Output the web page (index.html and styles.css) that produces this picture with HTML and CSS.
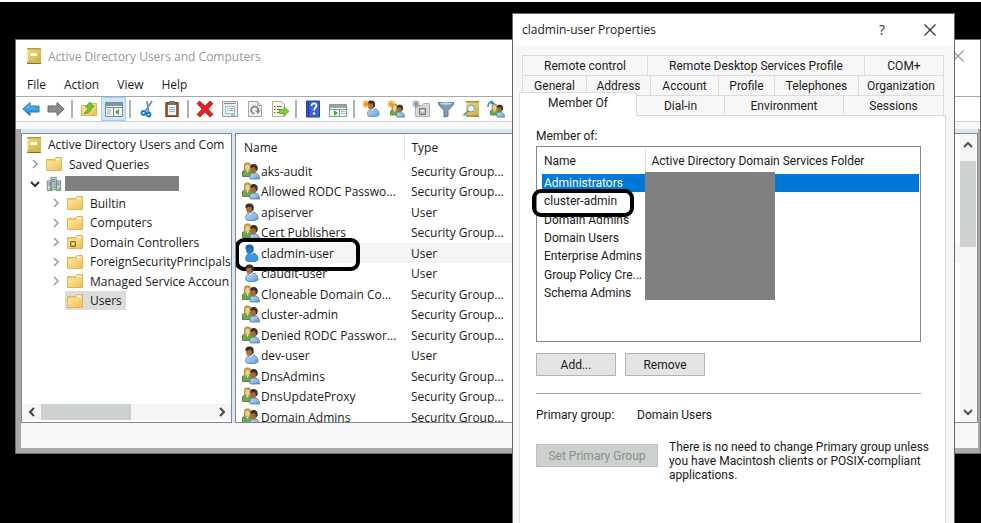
FILE: index.html
```html
<!DOCTYPE html>
<html lang="en">
<head>
    <meta charset="UTF-8">
    <meta name="viewport" content="width=device-width, initial-scale=1.0">
    <title>Active Directory Users and Computers</title>
    <link rel="stylesheet" href="styles.css">
</head>
<body>

<!-- shared icons -->
<svg class="sprite" aria-hidden="true">
    <defs>
        <linearGradient id="gold" x1="0" y1="0" x2="1" y2="1">
            <stop offset="0" stop-color="#ffe9a8"/>
            <stop offset="1" stop-color="#eebf52"/>
        </linearGradient>
        <linearGradient id="cover" x1="0" y1="0" x2="1" y2="1">
            <stop offset="0" stop-color="#f3e08a"/>
            <stop offset="1" stop-color="#c9ab3c"/>
        </linearGradient>
        <linearGradient id="sky" x1="0" y1="0" x2="0" y2="1">
            <stop offset="0" stop-color="#6cc7f7"/>
            <stop offset="1" stop-color="#1a7fd0"/>
        </linearGradient>
        <linearGradient id="body" x1="0" y1="0" x2="1" y2="1">
            <stop offset="0" stop-color="#c6e0f6"/>
            <stop offset="1" stop-color="#5f9dd6"/>
        </linearGradient>
    </defs>
    <symbol id="book" viewBox="0 0 14 16">
        <path d="M0 0h14v16H0z" fill="url(#cover)"/>
        <path d="M0 0h14v1.500H0z" fill="#b09a45"/>
        <path d="M0 13h14v2H0z" fill="#d3b94e"/>
        <path d="M0 15h14v1H0z" fill="#84702a"/>
        <path d="M2.500 4.500h8v4h-8z" fill="#fffbe0" stroke="#dcc566"/>
        <path d="M.5 1.500v12" stroke="#fbf0a8"/>
    </symbol>
    <symbol id="folder" viewBox="0 0 16 16">
        <path d="M.5 3.500h8l1.500-2h5.500v13H.5z" fill="#f3cd6c" stroke="#e0b65a"/>
        <path d="M10 2.500h4v2h-4z" fill="#fff"/>
        <path d="M1 5.500h9l1-1h4V14H1z" fill="url(#gold)"/>
    </symbol>
    <symbol id="ou" viewBox="0 0 16 16">
        <use href="#folder"/>
        <path d="M3.500 7.500h5v5h-5z" fill="#d8b63c" stroke="#8d701a"/>
        <path d="M5 9h2v1.500H5z" fill="#fff7c8"/>
    </symbol>
    <symbol id="domain" viewBox="0 0 18 18">
        <g fill="#c8d3d8" stroke="#6f8088">
            <path d="M5.500 1.500h6v14h-6zM1.500 5.500h5v11h-5zM11.500 5.500h5v11h-5z"/>
        </g>
        <path d="M7 4h3M7 6h3M3 8h2M3 10h2M13 8h2M13 10h2M8 9h2" stroke="#4d6570"/>
        <path d="M4 13.500h2v2H4zM8 11.500h2v2H8zM14 13.500h2v2h-2z" fill="#3cd03c"/>
    </symbol>
    <symbol id="user" viewBox="0 0 16 18">
        <path d="M3 16.500c-1-3 0-5 2-6.500l3 2 3-3c3 1.500 4.500 4 4 7l-3 1.500H5z" fill="url(#body)" stroke="#4277ab" stroke-width=".7"/>
        <path d="M5 9l3 3 2-3-1-2H5z" fill="#e8f2fb"/>
        <ellipse cx="6.500" cy="5.500" rx="3.500" ry="4.500" fill="#a9713f"/>
        <path d="M2.500 5C2 1.500 4 .5 6.500.5c3 0 5 1.500 4 6.500l-1.500 1.500C9 6 8.500 4 7.500 3.500z" fill="#3a3028"/>
    </symbol>
    <symbol id="user-on" viewBox="0 0 16 18">
        <path d="M3 16.500c-1-3 0-5 2-6.500l3 1 3-2c3 1.500 4.500 4 4 7l-3 1.500H5z" fill="#3a9ae2" stroke="#1763a8" stroke-width=".7"/>
        <ellipse cx="6.500" cy="5.500" rx="3.500" ry="4.500" fill="#2d77b4"/>
        <path d="M2.500 5C2 1.500 4 .5 6.500.5c3 0 5 1.500 4 6.500l-1.500 1.500C9 6 8.500 4 7.500 3.500z" fill="#1f659f"/>
    </symbol>
    <symbol id="group" viewBox="0 0 18 18">
        <path d="M.5 14.500V9.500l3-2h4l2 2v5z" fill="#6fa84a" stroke="#33631c" stroke-width=".7"/>
        <path d="M4 8l1.500 3L7 8z" fill="#dff0d0"/>
        <path d="M2 9V3.500C2 1 4 .5 5.500.5S9 1 9 3.500V8z" fill="#b8963f"/>
        <ellipse cx="5.500" cy="5.500" rx="2.200" ry="3" fill="#f3cb9c"/>
        <path d="M8 16.500c-.5-2 0-4 1.500-5.500h4.500c2.500 1 3.500 3 3.500 6H9z" fill="url(#body)" stroke="#3c70a5" stroke-width=".7"/>
        <ellipse cx="11.500" cy="7.500" rx="3" ry="4" fill="#a46c3c"/>
        <path d="M8.500 6C8 2.500 10 2 12 2s4.500 1.500 3.500 6L14 9.500C14 7 13 5 12 5z" fill="#3a3028"/>
    </symbol>
    <symbol id="star" viewBox="0 0 8 8">
        <path d="M4 0v8M0 4h8M1.200 1.200l5.600 5.600M6.800 1.200L1.200 6.800" stroke="currentColor" stroke-width="1.200"/>
        <circle cx="4" cy="4" r="2" fill="currentColor"/>
    </symbol>
    <symbol id="right" viewBox="0 0 10 10"><path d="M3 1l4 4-4 4" fill="none" stroke="currentColor" stroke-width="1.500"/></symbol>
    <symbol id="left" viewBox="0 0 10 10"><path d="M7 1L3 5l4 4" fill="none" stroke="currentColor" stroke-width="2"/></symbol>
    <symbol id="down" viewBox="0 0 10 10"><path d="M1 3l4 4 4-4" fill="none" stroke="currentColor" stroke-width="2"/></symbol>
    <symbol id="up" viewBox="0 0 10 10"><path d="M1 7l4-4 4 4" fill="none" stroke="currentColor" stroke-width="2"/></symbol>
    <symbol id="close" viewBox="0 0 12 12"><path d="M.5.5l11 11M11.500.5l-11 11" stroke="currentColor" stroke-width="1.200"/></symbol>
</svg>

<main class="desktop">

    <section class="window" aria-label="Active Directory Users and Computers">
        <header class="titlebar">
            <svg class="icon-book"><use href="#book"/></svg>
            <h1>Active Directory Users and Computers</h1>
            <button class="close" aria-label="Close"><svg class="icon-close"><use href="#close"/></svg></button>
        </header>

        <nav class="menu">
            <button>File</button>
            <button>Action</button>
            <button>View</button>
            <button>Help</button>
        </nav>

        <div class="toolbar" role="toolbar">
            <button aria-label="Back"><svg viewBox="0 0 18 18"><path d="M.8 9L8 2.500V6h9v6H8v3.500z" fill="url(#sky)" stroke="#2b78b5"/></svg></button>
            <button aria-label="Forward"><svg viewBox="0 0 18 18"><path d="M17.200 9L10 2.500V6H1v6h9v3.500z" fill="#8d8d8d" stroke="#666"/></svg></button>
            <span class="sep"></span>
            <button aria-label="Up one level"><svg viewBox="0 0 18 18"><path d="M1.500 5.500h6l2-2h7v12h-15z" fill="url(#gold)" stroke="#d9b25a"/><path d="M4 13.500c3-2 4-4 4-6.500H5.500l4.500-5 4 5h-2.500c0 4-3 6.500-7.500 6.500z" fill="#6ccc36" stroke="#3f9a1c" stroke-width=".8"/></svg></button>
            <button class="on" aria-label="Show tree"><svg viewBox="0 0 18 18"><path d="M.5 2.500h17v14H.5z" fill="#f3f5f7" stroke="#7d8a96"/><path d="M1 3h16v3H1z" fill="#8796a5"/><path d="M1 7.500h16M8.500 8v8" stroke="#7d8a96"/><path d="M2 10h4M2 12h4M2 14h4" stroke="#9fb0bf"/><path d="M14 9v6l-4-3z" fill="#35b52c"/></svg></button>
            <span class="sep"></span>
            <button aria-label="Cut"><svg viewBox="0 0 18 18"><path d="M14 1L7 12M9 1l1.500 11" stroke="#6d93b8" stroke-width="1.800"/><circle cx="5.500" cy="13" r="2" fill="none" stroke="#1c78c8" stroke-width="1.800"/><circle cx="10.500" cy="14.500" r="2" fill="none" stroke="#1c78c8" stroke-width="1.800"/></svg></button>
            <button aria-label="Paste"><svg viewBox="0 0 18 18"><path d="M2.800 2.500h12.400v14H2.800z" fill="#9a6034" stroke="#6d3e1c"/><path d="M5 5h8v10H5z" fill="#eef4fa"/><path d="M6 1h6v3.500H6z" fill="#777"/><path d="M6 7.500h6M6 9.500h6M6 11.500h6" stroke="#9ab"/></svg></button>
            <span class="sep"></span>
            <button aria-label="Delete"><svg viewBox="0 0 18 18"><path d="M1 3.500L3.500 1 9 6l5-5 3 2.500L12 9l5 5.500-3 2.500-5-5-5 5-3-2.500L6 9z" fill="#e32222" stroke="#b01010" stroke-width=".7"/></svg></button>
            <button aria-label="Properties"><svg viewBox="0 0 18 18"><path d="M1.500 1.500h15v15h-15z" fill="#eee" stroke="#9b9b9b"/><path d="M3 3.500h12" stroke="#8a8a8a"/><path d="M4.500 6.500h9v7h-9z" fill="#fff" stroke="#92bcd6"/><path d="M6 8.500h1.500M9 8.500h3M6 10.500h1.500M9 10.500h3M10 15h4" stroke="#5a9cc4"/></svg></button>
            <button aria-label="Refresh"><svg viewBox="0 0 18 18"><path d="M2.500 1.500h9l4 4v11h-13z" fill="#f2f2f2" stroke="#a5a5a5"/><path d="M11.500 1.500v4h4" fill="#ddd" stroke="#a5a5a5"/><path d="M8.500 13.500a3.500 3.500 0 1 1 3.500-2.500" fill="none" stroke="#888" stroke-width="1.800"/><path d="M9 10.500h5.500L12 14z" fill="#888"/></svg></button>
            <button aria-label="Export list"><svg viewBox="0 0 18 18"><path d="M1.500 1.500h9l3 3v12h-12z" fill="#fdf8e3" stroke="#b4ae95"/><path d="M3 6.500h1.500M6 6.500h5M3 9.500h1.500M6 9.500h3M3 12.500h1.500M6 12.500h3" stroke="#6a6a6a" stroke-width="1.200"/><path d="M8.500 9.500H13V7l5 4.500-5 4.500v-2.500H8.500z" fill="#6dd83a" stroke="#3e9d18" stroke-width=".7"/></svg></button>
            <span class="sep"></span>
            <button aria-label="Help topics"><svg viewBox="0 0 18 18"><path d="M2.500 1h13v16h-13z" fill="#3b63d4" stroke="#24409a"/><path d="M4.500 1v16" stroke="#1c3485"/><path d="M7.500 6c0-3.500 5-3.500 5-.5 0 2-2.500 2-2.500 5" fill="none" stroke="#fff" stroke-width="1.700"/><circle cx="10" cy="13.500" r="1.200" fill="#fff"/></svg></button>
            <button aria-label="Show action pane"><svg viewBox="0 0 18 18"><path d="M.5 4.500h17v12H.5z" fill="#f3f5f7" stroke="#8b979b"/><path d="M1 5h16v3H1z" fill="#9aa8a8"/><path d="M1 9.500h16M10.500 10v6" stroke="#8b979b"/><path d="M12 11.500h4M12 13.500h4" stroke="#9fb0bf"/><path d="M5 10v6l4-3z" fill="#35b52c"/></svg></button>
            <span class="sep"></span>
            <button aria-label="New user"><svg viewBox="0 0 18 18"><use href="#user" x="3" y="0" width="15" height="17"/><use class="gold-star" href="#star" x="0" y="0" width="8" height="8"/></svg></button>
            <button aria-label="New group"><svg viewBox="0 0 18 18"><use href="#group" x="3" y="3" width="15" height="15"/><use class="gold-star" href="#star" x="0" y="0" width="8" height="8"/></svg></button>
            <button aria-label="New organizational unit"><svg viewBox="0 0 18 18"><path d="M3.500 5.500h7l1-2h6v13h-14z" fill="#d8d8d8" stroke="#b0b0b0"/><path d="M7.500 8.500h6v6h-6z" fill="#bbb" stroke="#777"/><path d="M9 10h3v1.500H9z" fill="#fff"/><use class="gray-star" href="#star" x="0" y="0" width="8" height="8"/></svg></button>
            <button aria-label="Filter"><svg viewBox="0 0 18 18"><path d="M1.500 2.500h15v2l-5.500 6V16l-4 1v-6.500l-5.500-6z" fill="#7d9fb5" stroke="#557588"/><ellipse cx="9" cy="3.500" rx="6.500" ry="1.200" fill="#c9dbe6"/></svg></button>
            <button aria-label="Find"><svg viewBox="0 0 18 18"><path d="M4 1h13v16H4z" fill="url(#cover)"/><path d="M4 1h13v1.500H4z" fill="#a08b3a"/><path d="M4 15h13v2H4z" fill="#b3963a"/><circle cx="9" cy="8.500" r="3.500" fill="#e4f2fa" stroke="#8197a5"/><path d="M6.500 11L1.500 15.500" stroke="#7f8d98" stroke-width="2"/></svg></button>
            <button aria-label="Add to group"><svg viewBox="0 0 18 18"><use href="#group" x="3" y="3" width="15" height="15"/><path d="M1 7c0-4 2-5.500 4.500-5" fill="none" stroke="#2d8fd5" stroke-width="1.600"/><path d="M4.500 0L8 3.500 3.500 4.500z" fill="#2d8fd5"/></svg></button>
        </div>

        <div class="panes">
            <div class="tree-pane">
                <ul class="tree">
                    <li class="root"><svg class="icon-book"><use href="#book"/></svg>Active Directory Users and Com</li>
                    <li class="level1"><svg class="chevron"><use href="#right"/></svg><svg class="icon"><use href="#folder"/></svg>Saved Queries</li>
                    <li class="level1"><svg class="chevron open"><use href="#down"/></svg><svg class="icon"><use href="#domain"/></svg><span class="domain-name"></span></li>
                    <li class="level2"><svg class="chevron"><use href="#right"/></svg><svg class="icon"><use href="#folder"/></svg>Builtin</li>
                    <li class="level2"><svg class="chevron"><use href="#right"/></svg><svg class="icon"><use href="#folder"/></svg>Computers</li>
                    <li class="level2"><svg class="chevron"><use href="#right"/></svg><svg class="icon"><use href="#ou"/></svg>Domain Controllers</li>
                    <li class="level2"><svg class="chevron"><use href="#right"/></svg><svg class="icon"><use href="#folder"/></svg>ForeignSecurityPrincipals</li>
                    <li class="level2"><svg class="chevron"><use href="#right"/></svg><svg class="icon"><use href="#folder"/></svg>Managed Service Accoun</li>
                    <li class="level2"><span class="chevron"></span><span class="current"><svg class="icon"><use href="#folder"/></svg>Users</span></li>
                </ul>
                <div class="scroll-x">
                    <button aria-label="Scroll left"><svg><use href="#left"/></svg></button>
                    <span class="thumb"></span>
                    <button aria-label="Scroll right"><svg class="flip"><use href="#left"/></svg></button>
                </div>
            </div>

            <div class="list-pane">
                <table class="objects">
                    <thead>
                        <tr><th class="name">Name</th><th>Type</th></tr>
                    </thead>
                    <tbody>
                        <tr><td><svg class="icon"><use href="#group"/></svg>aks-audit</td><td>Security Group...</td></tr>
                        <tr><td><svg class="icon"><use href="#group"/></svg>Allowed RODC Passwo...</td><td>Security Group...</td></tr>
                        <tr><td><svg class="icon"><use href="#user"/></svg>apiserver</td><td>User</td></tr>
                        <tr><td><svg class="icon"><use href="#group"/></svg>Cert Publishers</td><td>Security Group...</td></tr>
                        <tr class="hot"><td><svg class="icon"><use href="#user-on"/></svg>cladmin-user<span class="marker"></span></td><td>User</td></tr>
                        <tr><td><svg class="icon"><use href="#user"/></svg>claudit-user</td><td>User</td></tr>
                        <tr><td><svg class="icon"><use href="#group"/></svg>Cloneable Domain Co...</td><td>Security Group...</td></tr>
                        <tr><td><svg class="icon"><use href="#group"/></svg>cluster-admin</td><td>Security Group...</td></tr>
                        <tr><td><svg class="icon"><use href="#group"/></svg>Denied RODC Passwor...</td><td>Security Group...</td></tr>
                        <tr><td><svg class="icon"><use href="#user"/></svg>dev-user</td><td>User</td></tr>
                        <tr><td><svg class="icon"><use href="#group"/></svg>DnsAdmins</td><td>Security Group...</td></tr>
                        <tr><td><svg class="icon"><use href="#group"/></svg>DnsUpdateProxy</td><td>Security Group...</td></tr>
                        <tr><td><svg class="icon"><use href="#group"/></svg>Domain Admins</td><td>Security Group...</td></tr>
                    </tbody>
                </table>
                <div class="scroll-y">
                    <button aria-label="Scroll up"><svg><use href="#up"/></svg></button>
                    <span class="thumb"></span>
                    <button aria-label="Scroll down"><svg><use href="#down"/></svg></button>
                </div>
            </div>
        </div>

        <footer class="statusbar"></footer>
    </section>

    <section class="dialog" role="dialog" aria-labelledby="dialog-title">
        <header class="dialog-title">
            <h2 id="dialog-title">cladmin-user Properties</h2>
            <button aria-label="Context help">?</button>
            <button aria-label="Close dialog"><svg class="icon-close"><use href="#close"/></svg></button>
        </header>

        <div class="tabs" role="tablist">
            <div class="tab-row row1">
                <button role="tab">Remote control</button>
                <button role="tab">Remote Desktop Services Profile</button>
                <button role="tab">COM+</button>
            </div>
            <div class="tab-row row2">
                <button role="tab">General</button>
                <button role="tab">Address</button>
                <button role="tab">Account</button>
                <button role="tab">Profile</button>
                <button role="tab">Telephones</button>
                <button role="tab">Organization</button>
            </div>
            <div class="tab-row row3">
                <button role="tab" class="active" aria-selected="true">Member Of</button>
                <button role="tab">Dial-in</button>
                <button role="tab">Environment</button>
                <button role="tab">Sessions</button>
            </div>
        </div>

        <div class="tab-page" role="tabpanel">
            <p class="caption" id="member-of">Member of:</p>
            <div class="members">
                <table aria-labelledby="member-of">
                    <thead>
                        <tr><th class="name">Name</th><th>Active Directory Domain Services Folder</th></tr>
                    </thead>
                    <tbody>
                        <tr class="selected"><td>Administrators</td><td></td></tr>
                        <tr><td>cluster-admin<span class="marker"></span></td><td></td></tr>
                        <tr><td>Domain Admins</td><td></td></tr>
                        <tr><td>Domain Users</td><td></td></tr>
                        <tr><td>Enterprise Admins</td><td></td></tr>
                        <tr><td>Group Policy Cre...</td><td></td></tr>
                        <tr><td>Schema Admins</td><td></td></tr>
                    </tbody>
                </table>
                <span class="redacted"></span>
            </div>

            <div class="actions">
                <button class="btn">Add...</button>
                <button class="btn">Remove</button>
            </div>

            <hr>

            <div class="primary">
                <label for="primary-group">Primary group:</label>
                <output id="primary-group">Domain Users</output>
            </div>

            <div class="set-primary">
                <button class="btn" disabled>Set Primary Group</button>
                <p>There is no need to change Primary group unless you have Macintosh clients or POSIX-compliant applications.</p>
            </div>
        </div>
    </section>

</main>

</body>
</html>
```

FILE: styles.css
```css
* {
    box-sizing: border-box;
}

body {
    margin: 0;
    font-family: "Open Sans", "Noto Sans", sans-serif;
    font-size: 12px;
    color: #1a1a1a;
}

h1, h2, p, ul {
    margin: 0;
    padding: 0;
    font-size: inherit;
    font-weight: normal;
}

button {
    padding: 0;
    border: none;
    background: none;
    font: inherit;
    color: inherit;
}

table {
    border-collapse: collapse;
    table-layout: fixed;
    width: 100%;
}

th, td {
    padding: 0;
    font-weight: normal;
    text-align: left;
    white-space: nowrap;
}

svg {
    display: block;
    flex: none;
}

.sprite {
    position: absolute;
    width: 0;
    height: 0;
}

.desktop {
    position: relative;
    height: 100vh;
    overflow: hidden;
    background: #000;
    border-top: 2px solid #fff;
}

/* console window */
.window {
    position: absolute;
    top: 37px;
    left: 15px;
    right: 0;
    bottom: 69px;
    display: flex;
    flex-direction: column;
    background: #f7f7f7;
    border: 1px solid #6e6e6e;
}

.titlebar {
    display: flex;
    align-items: center;
    gap: 7px;
    height: 32px;
    padding: 0 16px 0 11px;
    background: #fff;
    color: #999;
}

.titlebar .close {
    margin-left: auto;
}

.icon-book {
    width: 14px;
    height: 16px;
}

.icon-close {
    width: 12px;
    height: 12px;
}

.menu {
    display: flex;
    gap: 18px;
    height: 25px;
    padding: 0 11px;
    background: #fff;
    border-bottom: 1px solid #a8a8a8;
}

.toolbar {
    display: flex;
    height: 25px;
    padding-left: 2px;
    background: #fff;
    border-bottom: 1px solid #d4d4d4;
}

.toolbar button {
    display: flex;
    align-items: center;
    justify-content: center;
    width: 25px;
}

.toolbar button svg {
    width: 18px;
    height: 18px;
}

.toolbar .on {
    background: #cce8fb;
    border: 1px solid #9fd0f0;
}

.toolbar .sep {
    width: 2px;
    margin: 3px;
    background: #b0b0b0;
}

.gold-star {
    color: #f0a020;
}

.gray-star {
    color: #999;
}

.panes {
    display: flex;
    flex: 1;
    gap: 3px;
    min-height: 0;
    margin-top: 7px;
    padding-top: 4px;
    border-left: 5px solid #a9a9a9;
    border-right: 2px solid #a9a9a9;
    background: #d6e6f4;
}

.tree-pane,
.list-pane {
    overflow: hidden;
    background: #fff;
    border: 1px solid #828790;
}

.tree-pane {
    display: flex;
    flex-direction: column;
    flex: 0 0 211px;
}

.tree {
    display: grid;
    grid-auto-rows: 19px 20px;
    flex: 1;
    align-content: start;
    padding: 1px 0 0 5px;
    list-style: none;
    overflow: hidden;
}

.tree li {
    display: flex;
    align-items: center;
    gap: 7px;
    overflow: hidden;
    white-space: nowrap;
}

.tree .level1 {
    padding-left: 3px;
}

.tree .level2 {
    padding-left: 24px;
}

.icon {
    width: 16px;
    height: 16px;
}

.chevron {
    flex: none;
    width: 10px;
    height: 10px;
    margin-right: -1px;
    color: #9a9a9a;
}

.chevron.open {
    color: #333;
}

.domain-name {
    width: 114px;
    height: 15px;
    margin-left: -4px;
    background: #808080;
}

.current {
    display: flex;
    align-items: center;
    gap: 7px;
    height: 100%;
    margin-left: -2px;
    padding: 0 4px 0 2px;
    background: #dcdcdc;
}

.scroll-x {
    display: flex;
    justify-content: space-between;
    height: 16px;
    margin-bottom: 2px;
    background: #f5f5f5;
    color: #444;
}

.scroll-x button,
.scroll-y button {
    display: flex;
    align-items: center;
    justify-content: center;
    width: 19px;
    height: 16px;
}

.scroll-x svg,
.scroll-y svg {
    width: 10px;
    height: 10px;
}

.flip {
    transform: rotate(180deg);
}

.scroll-x .thumb {
    width: 43%;
    margin-right: auto;
    background: #cdd1cd;
}

.list-pane {
    display: flex;
    flex: 1;
}

.objects th {
    height: 27px;
    padding: 0 0 0 7px;
}

.objects .name {
    width: 168px;
    padding-left: 8px;
    border-right: 1px solid #e2e2e2;
}

.objects td {
    height: 20px;
    padding-left: 7px;
}

.objects tr:nth-child(even) td {
    height: 21px;
}

.objects td:first-child {
    position: relative;
    padding-left: 25px;
}

.objects .icon {
    position: absolute;
    left: 6px;
    top: 1px;
    width: 18px;
    height: 18px;
}

.objects .hot {
    background: linear-gradient(to right, #fff 23px, #f5f5f5 23px);
}

/* thick outline round an item */
.marker {
    position: absolute;
    border: 4px solid #000;
    border-radius: 9px;
}

.objects .marker {
    left: -1px;
    top: -5px;
    width: 125px;
    height: 33px;
}

.scroll-y {
    display: flex;
    flex-direction: column;
    flex: none;
    justify-content: space-between;
    width: 16px;
    margin: 1px 1px 0 0;
    background: #f5f5f5;
    color: #555;
}

.scroll-y button {
    width: 16px;
    height: 20px;
}

.scroll-y .thumb {
    height: 30%;
    margin: 6px 0 auto;
    background: #cdd1cd;
}

.statusbar {
    height: 30px;
    border: solid #a9a9a9;
    border-width: 0 2px 5px 5px;
}

/* properties dialog */
.dialog {
    position: absolute;
    top: 11px;
    right: 26px;
    bottom: 0;
    display: flex;
    flex-direction: column;
    width: 443px;
    background: #f7f7f7;
    border: 1px solid #666;
    border-bottom: none;
    font-family: Roboto, "Liberation Sans", sans-serif;
    font-size: 12px;
}

.dialog-title {
    display: flex;
    align-items: center;
    gap: 39px;
    height: 31px;
    padding: 0 18px 0 9px;
    background: #fff;
    font-family: "Open Sans", "Noto Sans", sans-serif;
}

.dialog-title h2 {
    flex: 1;
}

.dialog-title button {
    font-size: 14px;
    color: #333;
}

.tabs {
    margin: 10px 10px 0 9px;
}

.tab-row {
    display: grid;
    height: 20px;
    border-left: 1px solid #dcdcdc;
}

.row1 {
    grid-template-columns: 125fr 217fr 79fr;
}

.row2 {
    grid-template-columns: 64fr 64fr 68fr 56fr 84fr 85fr;
}

.row3 {
    grid-template-columns: 114fr 88fr 119fr 100fr;
}

.tab-row button {
    border: solid #dcdcdc;
    border-width: 1px 1px 0 0;
}

.tab-row .active {
    z-index: 1;
    margin: -3px 0 -1px -4px;
    padding-bottom: 4px;
    background: #fff;
    border-left-width: 1px;
}

.tab-page {
    flex: 1;
    min-height: 0;
    margin: 0 8px 0 6px;
    padding: 12px 24px 0 16px;
    background: #fff;
    border: 1px solid #dcdcdc;
    border-bottom: none;
}

.caption {
    height: 18px;
    line-height: 16px;
}

.members {
    position: relative;
    height: 196px;
    padding: 1px 1px 0 5px;
    border: 1px solid #828790;
}

.members th {
    height: 26px;
    padding: 0 0 0 6px;
}

.members .name {
    width: 103px;
    padding-left: 2px;
    border-right: 1px solid #e2e2e2;
}

.members td {
    position: relative;
    height: 18px;
    padding-left: 2px;
}

.members tr:nth-child(3n) td {
    height: 19px;
}

.members .selected {
    background: #0078d7;
    color: #fff;
}

.members .marker {
    left: -10px;
    top: -3px;
    width: 102px;
    height: 28px;
}

.redacted {
    position: absolute;
    left: 108px;
    top: 25px;
    width: 130px;
    height: 128px;
    background: #808080;
}

.actions {
    display: flex;
    gap: 9px;
    margin-top: 11px;
}

.btn {
    width: 80px;
    height: 23px;
    background: #e4e4e4;
    border: 1px solid #b4b4b4;
}

.btn:disabled {
    width: 122px;
    background: #cdd1cd;
    border-color: #bfbfbf;
    color: #8c8c8c;
}

hr {
    margin: 17px 0 0;
    border: none;
    border-top: 1px solid #a0a0a0;
}

.primary {
    display: grid;
    grid-template-columns: 101px 1fr;
    margin-top: 14px;
    line-height: 14px;
}

.set-primary {
    display: grid;
    grid-template-columns: 122px 1fr;
    gap: 11px;
    margin: 18px -12px 0 0;
    line-height: 14px;
}

.set-primary .btn {
    margin-top: 4px;
}
```
